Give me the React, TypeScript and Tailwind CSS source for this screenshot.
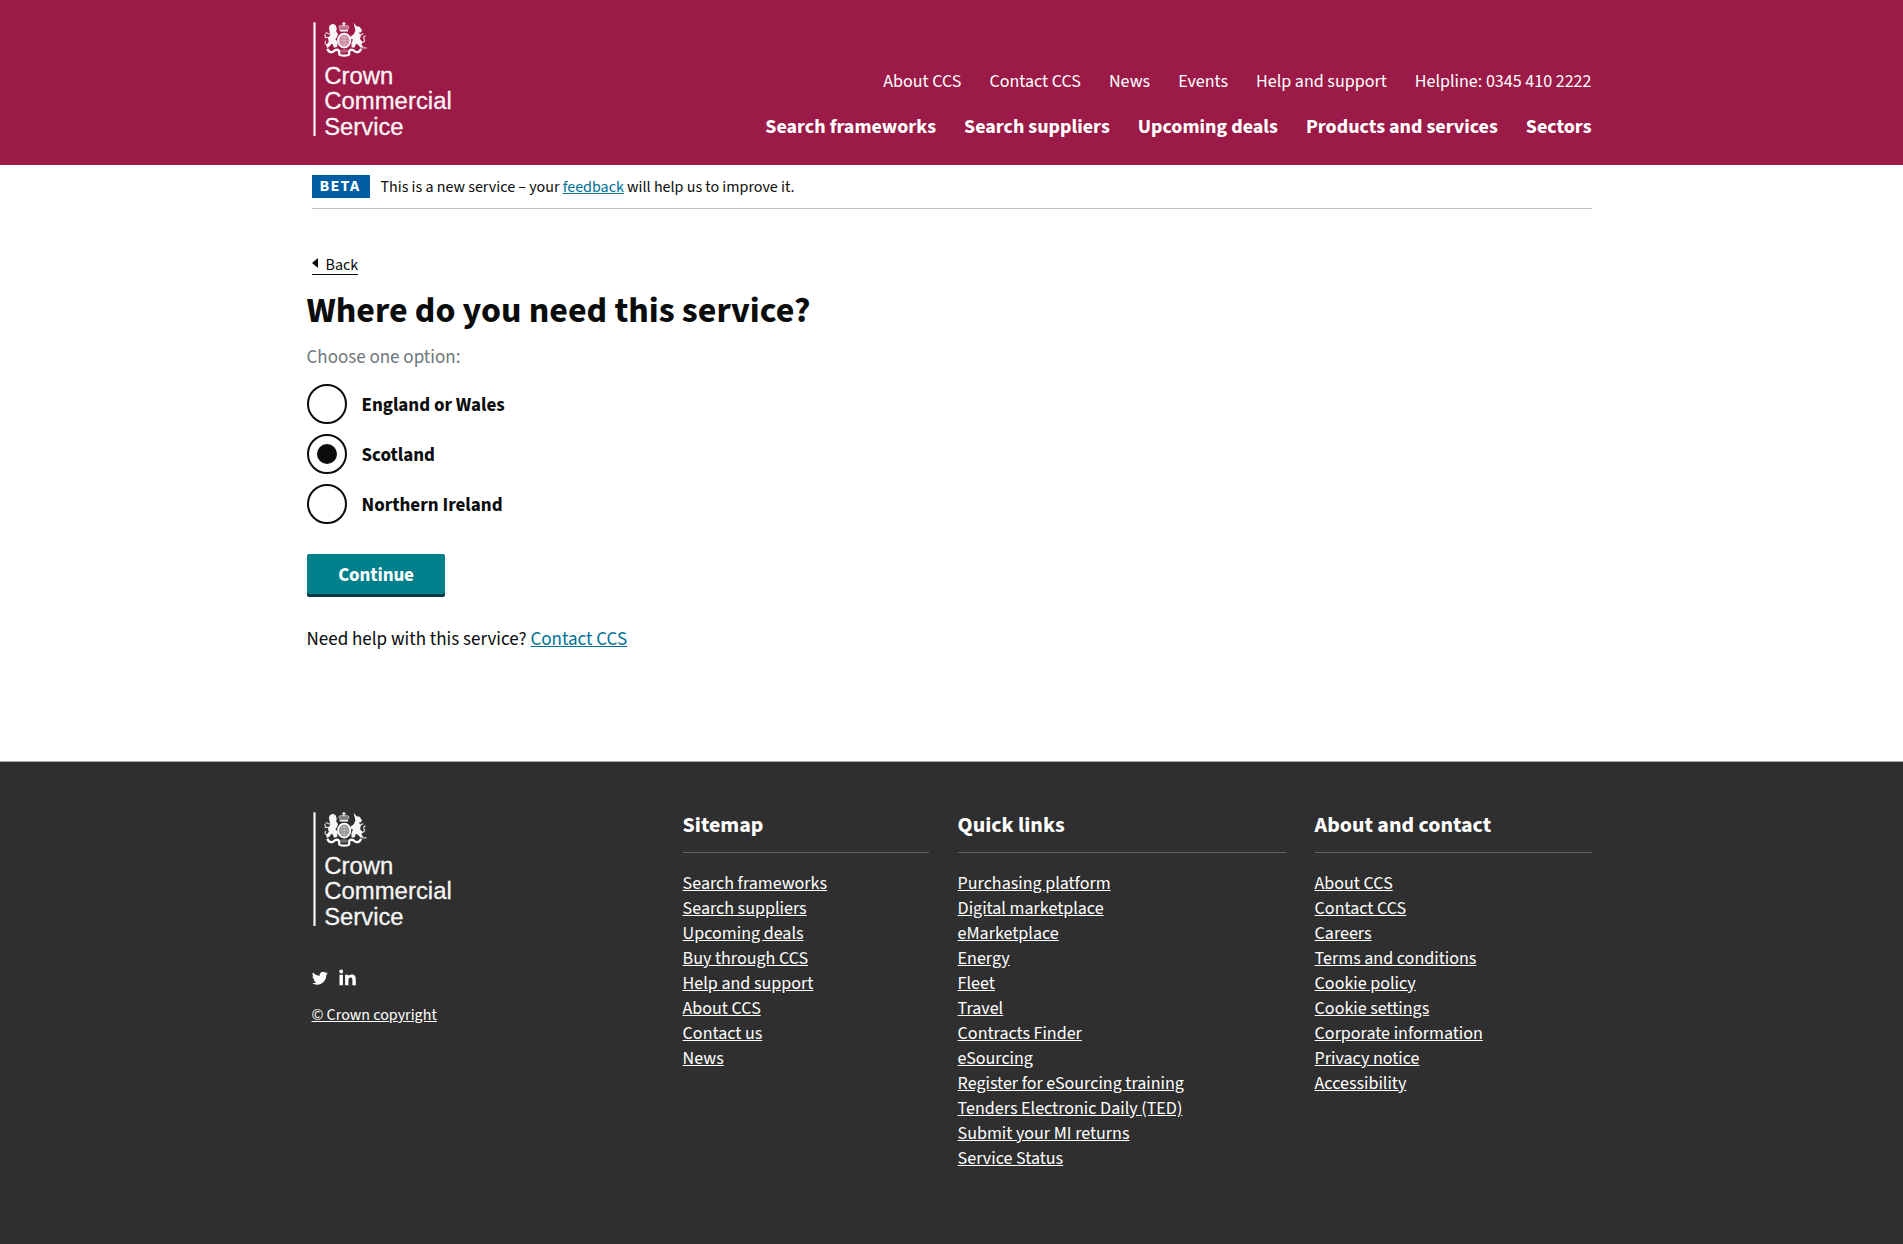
import { useState } from "react";

const topLinks = ["About CCS", "Contact CCS", "News", "Events", "Help and support", "Helpline: 0345 410 2222"];
const mainLinks = ["Search frameworks", "Search suppliers", "Upcoming deals", "Products and services", "Sectors"];
const options = ["England or Wales", "Scotland", "Northern Ireland"];
const columns = [
  {
    title: "Sitemap",
    box: "w-[246px] shrink-0",
    links: ["Search frameworks", "Search suppliers", "Upcoming deals", "Buy through CCS", "Help and support", "About CCS", "Contact us", "News"],
  },
  {
    title: "Quick links",
    box: "ml-[29px] w-[328px] shrink-0",
    links: [
      "Purchasing platform", "Digital marketplace", "eMarketplace", "Energy", "Fleet", "Travel", "Contracts Finder", "eSourcing",
      "Register for eSourcing training", "Tenders Electronic Daily (TED)", "Submit your MI returns", "Service Status",
    ],
  },
  {
    title: "About and contact",
    box: "ml-[29px] flex-1",
    links: ["About CCS", "Contact CCS", "Careers", "Terms and conditions", "Cookie policy", "Cookie settings", "Corporate information", "Privacy notice", "Accessibility"],
  },
];

function Logo() {
  return (
    <svg width="146" height="122" viewBox="0 0 146 122" className="block overflow-visible" fill="#fff" fillOpacity="0.96">
      <rect x="1.4" y="0.3" width="2.2" height="113.7" />
      <g>
        {/* crown */}
        <path d="M28.2 8.600 L26.600 4.600 Q28.800 2.400 31.800 4 Q35 2.400 37.200 4.600 L35.600 8.600 Z" fillOpacity="0.4" stroke="#fff" strokeOpacity="0.7" strokeWidth="0.6" />
        <path d="M31.200 0h1.400v1.200h1.200v1h-1.200v1.800h-1.400V2.200H30v-1h1.200z" />
        <rect x="27.800" y="8" width="8.200" height="1.500" />
        {/* shield */}
        <ellipse cx="32.200" cy="18.600" rx="6.200" ry="7" fillOpacity="0.5" />
        <ellipse cx="32.200" cy="18.600" rx="6.200" ry="7" fill="none" stroke="#fff" strokeWidth="1.7" />
        <path d="M32.200 12v13M26.400 18.600h11.600M28 15.400h8M28 22h8" stroke="#fff" strokeOpacity="0.3" strokeWidth="0.8" />
        {/* lion */}
        <path d="M17.600 3.600 L20.600 1.800 L23.400 3 L24.800 6.600 L24.200 9.600 L26 12 L25 15 L23.400 17.200 L25.800 20 L25.200 24.800 L22 25.800 L21 22.800 L19.400 21.800 L17.600 24.600 L15.200 26 L14 23.600 L16.800 19.800 L16 16.600 L18.400 12.400 L17.600 9.400 L17 6 Z" />
        <path d="M18 12.200l-4.400-1.600M17 15.400l-4.400.2M16 22.800c-2.800.4-3.600-1.800-2.200-4M12.600 12l1.400 3.400" fill="none" stroke="#fff" strokeOpacity="0.75" strokeWidth="1.300" />
        {/* unicorn */}
        <path d="M41.600 .8 L44.600 4.200 L47.600 4.800 L50.200 8.600 L48.600 10.600 L46.800 10.400 L49 13.600 L48 17 L50.200 19.600 L49.600 23 L51.400 24.800 L48.600 25.800 L45.800 22.600 L43.800 22 L42.600 25.400 L39.600 25.600 L39.400 21.400 L41 17.600 L38.800 16.800 L38.600 14.400 L41.800 12.200 L43.400 8.400 Z" />
        <path d="M48.800 20.600c3.200 0 4.600-1.600 3.400-3.400s-.4-3 1.400-3.200M48 13.200l3.400-1.600M50 25.800h4.600" fill="none" stroke="#fff" strokeOpacity="0.75" strokeWidth="1.300" />
        {/* motto ribbon */}
        <path d="M15.200 26.800 Q17.400 31.600 21.400 29.400 Q25.600 26.200 27.200 29.200 L27.200 32.200 Q27.400 33.600 32.200 33.600 Q37 33.600 37.200 32.200 L37.200 29.200 Q38.800 26.200 43 29.400 Q47 31.600 49.200 26.800" fill="none" stroke="#fff" strokeWidth="2.300" />
        <path d="M28.600 27.400h7.200v3.200h-7.200z" fillOpacity="0.3" />
      </g>
      <g fontFamily="'Liberation Sans', Arial, sans-serif" fontSize="24.8" stroke="#fff" strokeWidth="0.3">
        <text x="12.2" y="61.6" textLength="69" lengthAdjust="spacingAndGlyphs">Crown</text>
        <text x="12.2" y="87.4" textLength="127.6" lengthAdjust="spacingAndGlyphs">Commercial</text>
        <text x="12.2" y="113.4" textLength="79.4" lengthAdjust="spacingAndGlyphs">Service</text>
      </g>
    </svg>
  );
}

export default function App() {
  const [selected, setSelected] = useState("Scotland");
  return (
    <div className="flex min-h-[1244px] flex-col bg-white font-['Source_Sans_3','Noto_Sans_CJK_SC',sans-serif] text-[#0b0c0c]">
      <header className="h-[165px] bg-[#9b1a47]">
        <div className="mx-auto flex w-[1280px] justify-between">
          <div className="pt-[22px]"><Logo /></div>
          <nav className="flex flex-col items-end pt-[69px] whitespace-nowrap text-white">
            <ul className="flex gap-7 text-[18px] leading-[25px]">
              {topLinks.map((t) => <li key={t}><a href="#">{t}</a></li>)}
            </ul>
            <ul className="mt-[20px] flex gap-7 text-[20px] leading-[26px] font-bold">
              {mainLinks.map((t) => <li key={t}><a href="#">{t}</a></li>)}
            </ul>
          </nav>
        </div>
      </header>
      <div className="mx-auto w-[1280px]">
        <div className="flex h-[44px] items-start gap-[11px] border-b border-[#bfc1c3] pt-[10px] text-[16px] leading-[23px]">
          <strong className="h-[23px] w-[58px] bg-[#005ea5] pl-[8px] tracking-[1.3px] text-white">BETA</strong>
          <span className="pt-px">This is a new service – your <a href="#" className="text-[#007194] underline">feedback</a> will help us to improve it.</span>
        </div>
        <a href="#" className="mt-[45px] flex h-[21px] w-fit items-start gap-[8px] border-b border-[#0b0c0c] text-[16px] leading-[22px]">
          <span className="mt-[4px] h-0 w-0 border-y-[5px] border-r-[6px] border-y-transparent border-r-[#0b0c0c]" />
          Back
        </a>
      </div>
      <main className="mx-auto w-[1290px]">
        <h1 className="mt-[14px] text-[36px] leading-[44px] font-bold">Where do you need this service?</h1>
        <p className="mt-[12px] text-[19px] leading-[26px] text-[#6f777b]">Choose one option:</p>
        <div className="mt-[13px] flex flex-col gap-[10px]">
          {options.map((o) => (
            <button key={o} onClick={() => setSelected(o)} className="flex h-[40px] items-center text-left text-[19px] leading-[25px] font-bold">
              <span className="flex h-[40px] w-[40px] items-center justify-center rounded-full border-2 border-[#0b0c0c]">
                {selected === o && <span className="h-[20px] w-[20px] rounded-full bg-[#0b0c0c]" />}
              </span>
              <span className="ml-[15px] pt-[2px]">{o}</span>
            </button>
          ))}
        </div>
        <button className="mt-[30px] block h-[40px] w-[138px] rounded-[2px] bg-[#00808b] pt-px pl-px text-[19px] leading-[41px] font-bold tracking-[-0.1px] text-white shadow-[0_3px_0_#003c41]">Continue</button>
        <p className="mt-[33px] text-[19px] leading-[25px]">Need help with this service? <a href="#" className="text-[#007194] underline">Contact CCS</a></p>
      </main>
      <footer className="mt-auto h-[483px] border-t border-[#a1acb2] bg-[#2f2f2f] text-white">
        <div className="mx-auto flex w-[1280px] pt-[50px]">
          <div className="w-[371.1px] shrink-0">
            <Logo />
            <div className="mt-[35px] flex items-center gap-[11px]">
              <svg width="16" height="16" viewBox="0 0 24 24" fill="#fff"><path d="M23.600 4.900c-.9.4-1.800.7-2.800.8 1-.6 1.800-1.600 2.100-2.700-.9.600-2 1-3.100 1.200A4.900 4.900 0 0 0 11.500 8.700C7.400 8.500 3.800 6.500 1.400 3.600.1 5.800.8 8.700 2.900 10.100c-.8 0-1.600-.2-2.200-.6-.1 2.300 1.600 4.400 3.900 4.900-.7.2-1.500.2-2.200.1.600 2 2.400 3.400 4.600 3.400A9.900 9.900 0 0 1 0 19.900a13.900 13.900 0 0 0 7.500 2.200c9.100 0 14.200-7.700 13.900-14.600 1-.7 1.700-1.600 2.200-2.600z" /></svg>
              <svg width="17" height="17" viewBox="0 0 24 24" fill="#fff"><path d="M.7 8.200h4.800V23H.7zM3.100.8a2.800 2.800 0 1 1 0 5.600 2.800 2.800 0 0 1 0-5.600zM8.600 8.200h4.600v2.100c.7-1.300 2.300-2.500 4.700-2.500 4.900 0 5.800 3.100 5.800 7.200v8h-4.800v-7.200c0-1.700 0-3.800-2.400-3.800s-3.100 1.800-3.100 3.700V23H8.600z" /></svg>
            </div>
            <a href="#" className="mt-[18px] block text-[16px] leading-[22px] underline">© Crown copyright</a>
          </div>
          {columns.map((c) => (
            <section key={c.title} className={c.box}>
              <h2 className="h-[41px] border-b border-[#626262] text-[22px] leading-[26px] font-bold">{c.title}</h2>
              <ul className="mt-[18px] text-[18px] leading-[25px]">
                {c.links.map((l) => <li key={l}><a href="#" className="underline">{l}</a></li>)}
              </ul>
            </section>
          ))}
        </div>
      </footer>
    </div>
  );
}
